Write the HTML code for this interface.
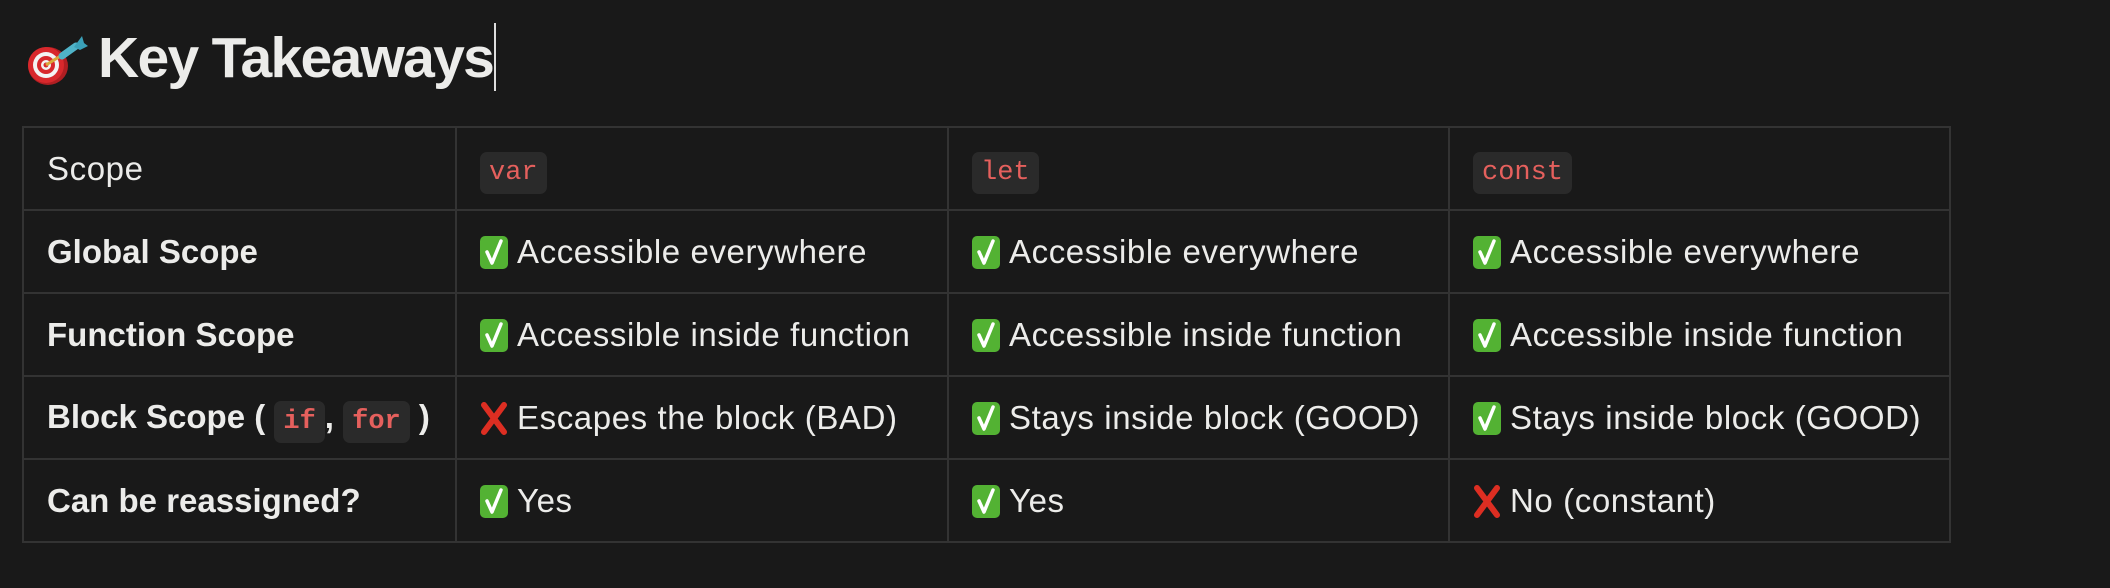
<!DOCTYPE html>
<html><head><meta charset="utf-8"><style>
html,body{margin:0;padding:0;background:#191919;width:2110px;height:588px;overflow:hidden;font-family:"Liberation Sans",sans-serif;color:#ececea}
h1{position:absolute;left:98px;top:18px;margin:0;font-size:57px;font-weight:700;line-height:80px;letter-spacing:-1.7px}
h1 span{display:inline-block;width:2px;height:68px;background:#ddd;vertical-align:-14px;margin-left:1px}
.emo{position:absolute;left:26px;top:34px}
table{position:absolute;left:22px;top:126px;border-collapse:collapse;font-size:33px;letter-spacing:0.6px}
td{border:2px solid #333;height:81px;padding:0 0 0 23px;vertical-align:middle;white-space:nowrap}
td.b{font-weight:700;letter-spacing:0}
code{font-family:"Liberation Mono",monospace;color:#e5605d;background:#2a2a2a;border-radius:7px;padding:6px 9px;font-size:27px;letter-spacing:0}
.ck,.x{display:inline-block;width:28px;height:33px;vertical-align:-6px;margin-right:9px}
</style></head><body>
<svg class="emo" width="62" height="52" viewBox="0 0 62 52">
<ellipse cx="22" cy="32" rx="20" ry="19" fill="#b01e22"/>
<ellipse cx="20" cy="31" rx="18" ry="18" fill="#d8282c"/>
<ellipse cx="20" cy="31" rx="13" ry="13" fill="#f3f3f3"/>
<ellipse cx="20" cy="31" rx="9" ry="9" fill="#d8282c"/>
<ellipse cx="20" cy="31" rx="5" ry="5" fill="#f3f3f3"/>
<ellipse cx="20" cy="31" rx="2.5" ry="2.5" fill="#d8282c"/>
<path d="M20 31 L44 16" stroke="#d9a93a" stroke-width="3"/>
<path d="M36 22 L50 12" stroke="#4fb3c8" stroke-width="7" stroke-linecap="round"/>
<path d="M48 13 L56 2 L58 9 L62 12 L54 16 Z" fill="#3aa0b8"/>
</svg>
<h1>Key Takeaways<span></span></h1>
<svg width="0" height="0" style="position:absolute"><defs>
<symbol id="c" viewBox="0 0 28 33"><rect x="0" y="0" width="28" height="33" rx="5" fill="#53b233"/><path d="M7 16 L12 27 L21 5" stroke="#fff" stroke-width="3.5" fill="none" stroke-linecap="round" stroke-linejoin="round"/></symbol>
<symbol id="xx" viewBox="0 0 28 33"><path d="M4 3 L24 30 M24 3 L4 30" stroke="#dd2e22" stroke-width="6" stroke-linecap="round"/></symbol>
</defs></svg>
<table>
<colgroup><col style="width:433px"><col style="width:492px"><col style="width:501px"><col style="width:501px"></colgroup>
<tr><td>Scope</td><td><code>var</code></td><td><code>let</code></td><td><code>const</code></td></tr>
<tr><td class="b">Global Scope</td><td><svg class="ck"><use href="#c"/></svg>Accessible everywhere</td><td><svg class="ck"><use href="#c"/></svg>Accessible everywhere</td><td><svg class="ck"><use href="#c"/></svg>Accessible everywhere</td></tr>
<tr><td class="b">Function Scope</td><td><svg class="ck"><use href="#c"/></svg>Accessible inside function</td><td><svg class="ck"><use href="#c"/></svg>Accessible inside function</td><td><svg class="ck"><use href="#c"/></svg>Accessible inside function</td></tr>
<tr><td class="b">Block Scope ( <code>if</code>, <code>for</code> )</td><td><svg class="x"><use href="#xx"/></svg>Escapes the block (BAD)</td><td><svg class="ck"><use href="#c"/></svg>Stays inside block (GOOD)</td><td><svg class="ck"><use href="#c"/></svg>Stays inside block (GOOD)</td></tr>
<tr><td class="b">Can be reassigned?</td><td><svg class="ck"><use href="#c"/></svg>Yes</td><td><svg class="ck"><use href="#c"/></svg>Yes</td><td><svg class="x"><use href="#xx"/></svg>No (constant)</td></tr>
</table>
</body></html>
